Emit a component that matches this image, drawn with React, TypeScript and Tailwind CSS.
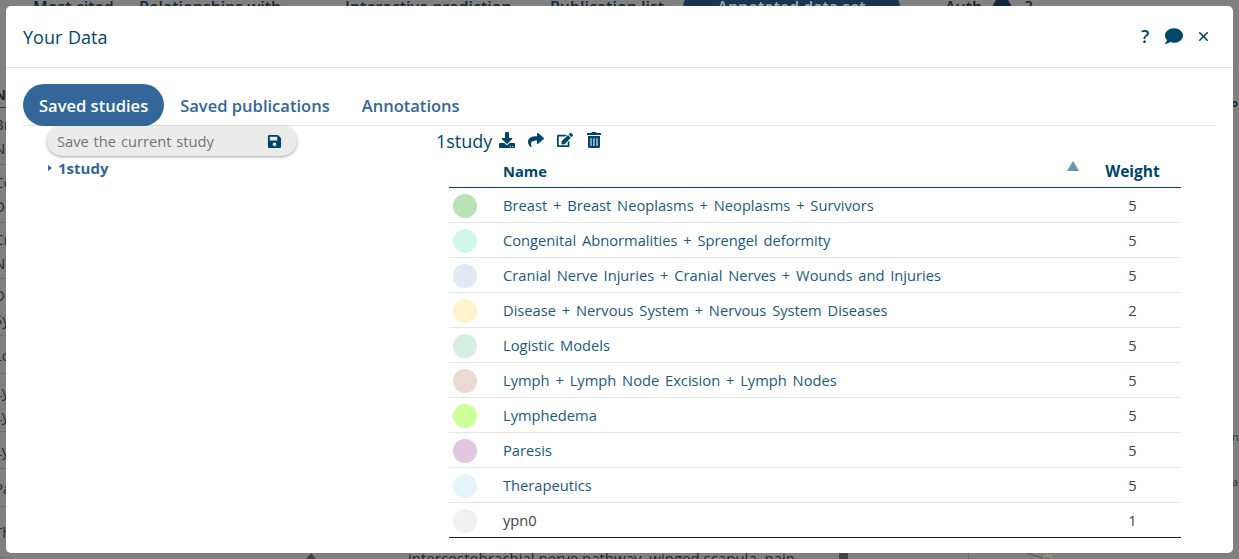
import { FaComment, FaSave, FaDownload, FaShare, FaEdit, FaTrashAlt } from "react-icons/fa";
import { X } from "lucide-react";

const rows: [string, string, number][] = [
  ["#b9e2b5", "Breast + Breast Neoplasms + Neoplasms + Survivors", 5],
  ["#d0f7e9", "Congenital Abnormalities + Sprengel deformity", 5],
  ["#deebf5", "Cranial Nerve Injuries + Cranial Nerves + Wounds and Injuries", 5],
  ["#fef3cd", "Disease + Nervous System + Nervous System Diseases", 2],
  ["#d5eee0", "Logistic Models", 5],
  ["#ebd9d2", "Lymph + Lymph Node Excision + Lymph Nodes", 5],
  ["#ccff99", "Lymphedema", 5],
  ["#e2c6e0", "Paresis", 5],
  ["#e5f3fa", "Therapeutics", 5],
  ["#f0f0f0", "ypn0", 1],
];

const bgRows: [number, string[]][] = [
  [57, ["Breast", "Neoplasms"]],
  [58, ["Congenital", "Deformity"]],
  [56, ["Cranial", "Nerve"]],
  [57, ["Disease", "System"]],
  [38, ["Logistic"]],
  [58, ["Lymph", "Lymph"]],
  [37, ["Lymphedema"]],
  [38, ["Paresis"]],
  [51, ["Therapeutics"]],
];

export default function App() {
  return (
    <div className="relative h-[559px] w-[1239px] overflow-hidden bg-[#808080] font-['Open_Sans','Noto_Sans',sans-serif] text-[#00466a]">
      {/* page behind the dialog */}
      <div className="flex h-[14px] items-center whitespace-nowrap text-[16px] font-semibold leading-none text-[#12283a]">
        <span className="ml-[33px] w-[106px] shrink-0 overflow-hidden">Most cited</span>
        <span className="w-[206px] shrink-0">Relationships with</span>
        <span className="w-[205px] shrink-0">Interactive prediction</span>
        <span className="w-[133px] shrink-0">Publication list</span>
        <span className="flex h-[28px] w-[217px] shrink-0 items-center justify-center rounded-full bg-[#1a3552] text-[#9aa7b3]">Annotated data set</span>
        <span className="ml-[45px] w-[48px] shrink-0">Auth</span>
        <span className="h-[18px] w-[18px] shrink-0 rounded-full bg-[#12283a]" />
        <span className="ml-[14px]">?</span>
      </div>
      <div className="flex h-[545px]">
        <div className="w-[6px] shrink-0 overflow-hidden pt-[70px] text-[15px] text-[#222a30]">
          <div className="ml-[-6px] h-[24px] w-[12px] overflow-hidden border-b border-[#333333] font-bold leading-[20px]">Name</div>
          {bgRows.map(([h, lines], i) => (
            <div key={i} style={{ height: h }} className="ml-[-6px] flex w-[12px] flex-col justify-center overflow-hidden whitespace-nowrap border-b border-[#6e6e6e] leading-[24px]">
              {lines.map((l, j) => (
                <span key={j}>{l}</span>
              ))}
            </div>
          ))}
        </div>
        <div className="ml-[299px] flex items-end">
          <span className="mb-[-1px] h-0 w-0 border-x-[6px] border-b-[7px] border-x-transparent border-b-[#444444]" />
        </div>
        <div className="flex flex-1 items-end">
          <div className="mb-[-9px] ml-[91px] w-[431px] whitespace-nowrap text-[15px] leading-[20px] text-[#222222]">intercostobrachial nerve pathway, winged scapula, pain</div>
          <span className="h-[6px] w-[9px] bg-[#444444]" />
          <svg viewBox="0 0 90 6" className="ml-[120px] h-[6px] w-[90px]" fill="none">
            <path d="M0 0V6" stroke="#4a5a68" />
            <path d="M58 0 78 6" stroke="#4a5a68" />
            <circle cx="80" cy="6" r="4" stroke="#a8a860" />
          </svg>
        </div>
        <div className="flex w-[6px] shrink-0 flex-col overflow-hidden pt-[81px] text-[11px] leading-[16px] text-[#2a2f33]">
          <span className="ml-[-2px] mb-[318px] font-bold text-[#12283a]">o</span>
          <span className="ml-[-1px] mb-[29px]">n</span>
          <span className="ml-[-1px]">a</span>
        </div>
      </div>

      {/* dialog */}
      <div className="absolute left-[6px] top-[6px] flex h-[547px] w-[1227px] flex-col rounded-[5px] bg-white">
        <header className="flex h-[62px] items-center justify-between border-b border-[#e2e2e2] pl-[17px] pr-[22px]">
          <h1 className="pt-[1px] text-[18px] font-medium leading-none [word-spacing:1px]">Your Data</h1>
          <div className="flex items-center text-[#00466a]">
            <span className="mb-[1px] w-[24px] text-[18px] font-semibold leading-none">?</span>
            <FaComment size={18} className="mb-[1px]" />
            <X size={15} strokeWidth={2.6} className="mb-[1px] ml-[13px]" />
          </div>
        </header>

        <div className="mx-[17px] flex h-[58px] shrink-0 items-end border-b border-[#e2e2e2] text-[16.55px] font-semibold text-[#336699]">
          <button className="mb-[-1px] flex h-[42px] items-center rounded-[21px] bg-[#336699] px-[16px] pt-[2px] text-white">Saved studies</button>
          <button className="mb-[-1px] flex h-[42px] items-center px-[16px] pt-[2px]">Saved publications</button>
          <button className="mb-[-1px] flex h-[42px] items-center px-[16px] pt-[2px]">Annotations</button>
        </div>

        <div className="flex">
          <aside className="w-[430px] shrink-0 pl-[41px]">
            <div className="flex h-[30px] w-[250px] items-center justify-between rounded-full bg-[#ebebeb] pl-[10px] pr-[15px] text-[14.7px] text-[#757575] shadow-[0_1px_3px_rgba(0,0,0,0.35)] [word-spacing:1px]">
              <span>Save the current study</span>
              <FaSave size={15} className="text-[#00466a]" />
            </div>
            <div className="mt-[1px] flex items-center gap-[6px] pl-[1px] text-[15px] font-bold text-[#336699]">
              <span className="h-0 w-0 border-y-[3px] border-l-[4px] border-y-transparent border-l-[#336699]" />
              <span>1study</span>
            </div>
          </aside>

          <section className="flex-1">
            <div className="flex h-[30px] items-center text-[18px]">
              <span className="mr-[7px]">1study</span>
              <span className="mb-[2px] flex items-center gap-[13px]">
                <FaDownload size={16} />
                <FaShare size={16} />
                <FaEdit size={16} />
                <FaTrashAlt size={16} />
              </span>
            </div>
            <table className="ml-[13px] w-[732px] table-fixed border-collapse text-[14.7px] [word-spacing:2px]">
              <thead>
                <tr className="h-[31px] border-b border-[#00466a]">
                  <th className="w-[54px]" />
                  <th className="relative text-left font-bold">
                    Name
                    <svg viewBox="0 0 12 10" className="absolute right-[5px] top-[5px] h-[10px] w-[12px]" fill="#6b93ab">
                      <path d="M6 0 12 10H0Z" />
                    </svg>
                  </th>
                  <th className="w-[97px] text-center text-[15.5px] font-bold">Weight</th>
                </tr>
              </thead>
              <tbody>
                {rows.map(([color, name, weight], i) => (
                  <tr key={name} className={i === rows.length - 1 ? "h-[35px] border-b border-[#222222]" : "h-[35px] border-b border-[#e5e5e5]"}>
                    <td className="pl-[4px] pt-[2px]">
                      <div className="h-[24px] w-[24px] rounded-full" style={{ backgroundColor: color }} />
                    </td>
                    <td className={i === rows.length - 1 ? "pt-[2px] text-[#444444]" : "pt-[2px] text-[#1c5a7d]"}>{name}</td>
                    <td className="pt-[2px] text-center text-[#444444]">{weight}</td>
                  </tr>
                ))}
              </tbody>
            </table>
          </section>
        </div>
      </div>
    </div>
  );
}
